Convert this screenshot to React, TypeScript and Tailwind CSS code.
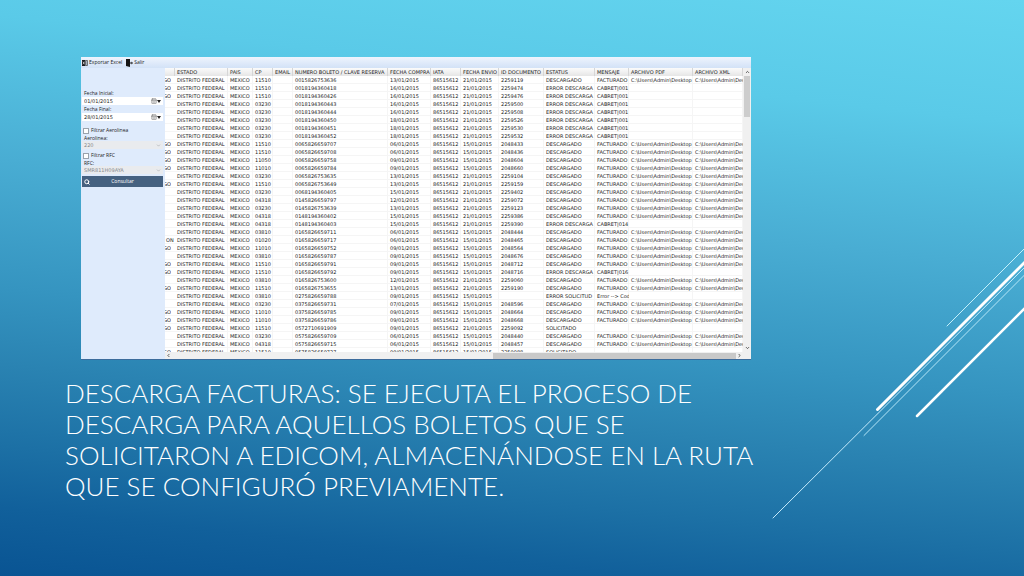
import { CalendarDays, ChevronDown, ChevronLeft, ChevronRight, ChevronUp, Search } from "lucide-react";

type Row = [string, string, string, string, string, string, string, string, string];

const ROUTE = "C:\\Users\\Admin\\Desktop";

// city, postal code, ticket, purchase date, IATA, sent date, document, status, message
const rows: Row[] = [
  ["GO", "11510", "0015826753636", "13/01/2015", "86515612", "21/01/2015", "2259119", "DESCARGADO", "FACTURADO"],
  ["GO", "11510", "0018194360418", "16/01/2015", "86515612", "21/01/2015", "2259474", "ERROR DESCARGA", "CABRET|001"],
  ["GO", "11510", "0018194360426", "16/01/2015", "86515612", "21/01/2015", "2259476", "ERROR DESCARGA", "CABRET|001"],
  ["", "03230", "0018194360443", "16/01/2015", "86515612", "21/01/2015", "2259500", "ERROR DESCARGA", "CABRET|001"],
  ["", "03230", "0018194360444", "16/01/2015", "86515612", "21/01/2015", "2259508", "ERROR DESCARGA", "CABRET|001"],
  ["", "03230", "0018194360450", "18/01/2015", "86515612", "21/01/2015", "2259526", "ERROR DESCARGA", "CABRET|001"],
  ["", "03230", "0018194360451", "18/01/2015", "86515612", "21/01/2015", "2259530", "ERROR DESCARGA", "CABRET|001"],
  ["", "03230", "0018194360452", "18/01/2015", "86515612", "21/01/2015", "2259532", "ERROR DESCARGA", "CABRET|001"],
  ["GO", "11510", "0065826659707", "06/01/2015", "86515612", "15/01/2015", "2048433", "DESCARGADO", "FACTURADO"],
  ["GO", "11510", "0065826659708", "06/01/2015", "86515612", "15/01/2015", "2048436", "DESCARGADO", "FACTURADO"],
  ["GO", "11050", "0065826659758", "09/01/2015", "86515612", "15/01/2015", "2048604", "DESCARGADO", "FACTURADO"],
  ["GO", "11010", "0065826659784", "09/01/2015", "86515612", "15/01/2015", "2048660", "DESCARGADO", "FACTURADO"],
  ["", "03230", "0065826753635", "13/01/2015", "86515612", "21/01/2015", "2259104", "DESCARGADO", "FACTURADO"],
  ["GO", "11510", "0065826753649", "13/01/2015", "86515612", "21/01/2015", "2259159", "DESCARGADO", "FACTURADO"],
  ["", "03230", "0068194360405", "15/01/2015", "86515612", "21/01/2015", "2259402", "DESCARGADO", "FACTURADO"],
  ["", "04318", "0145826659797", "12/01/2015", "86515612", "21/01/2015", "2259072", "DESCARGADO", "FACTURADO"],
  ["", "03230", "0145826753639", "13/01/2015", "86515612", "21/01/2015", "2259123", "DESCARGADO", "FACTURADO"],
  ["", "04318", "0148194360402", "15/01/2015", "86515612", "21/01/2015", "2259386", "DESCARGADO", "FACTURADO"],
  ["", "04318", "0148194360403", "15/01/2015", "86515612", "21/01/2015", "2259390", "ERROR DESCARGA", "CABRET|014"],
  ["", "03810", "0165826659711", "06/01/2015", "86515612", "15/01/2015", "2048444", "DESCARGADO", "FACTURADO"],
  ["ON", "01020", "0165826659717", "06/01/2015", "86515612", "15/01/2015", "2048465", "DESCARGADO", "FACTURADO"],
  ["GO", "11010", "0165826659752", "09/01/2015", "86515612", "15/01/2015", "2048564", "DESCARGADO", "FACTURADO"],
  ["", "03810", "0165826659787", "09/01/2015", "86515612", "15/01/2015", "2048676", "DESCARGADO", "FACTURADO"],
  ["GO", "11510", "0165826659791", "09/01/2015", "86515612", "15/01/2015", "2048712", "DESCARGADO", "FACTURADO"],
  ["GO", "11510", "0165826659792", "09/01/2015", "86515612", "15/01/2015", "2048716", "ERROR DESCARGA", "CABRET|016"],
  ["", "03810", "0165826753600", "12/01/2015", "86515612", "21/01/2015", "2259060", "DESCARGADO", "FACTURADO"],
  ["GO", "11510", "0165826753655", "13/01/2015", "86515612", "21/01/2015", "2259190", "DESCARGADO", "FACTURADO"],
  ["", "03810", "0275826659788", "09/01/2015", "86515612", "15/01/2015", "", "ERROR SOLICITUD", "Error --> Cod"],
  ["", "03230", "0375826659731", "07/01/2015", "86515612", "15/01/2015", "2048596", "DESCARGADO", "FACTURADO"],
  ["GO", "11010", "0375826659785", "09/01/2015", "86515612", "15/01/2015", "2048664", "DESCARGADO", "FACTURADO"],
  ["GO", "11010", "0375826659786", "09/01/2015", "86515612", "15/01/2015", "2048668", "DESCARGADO", "FACTURADO"],
  ["GO", "11510", "0572710691909", "09/01/2015", "86515612", "21/01/2015", "2259092", "SOLICITADO", ""],
  ["", "03230", "0575826659709", "06/01/2015", "86515612", "15/01/2015", "2048440", "DESCARGADO", "FACTURADO"],
  ["", "04318", "0575826659715", "06/01/2015", "86515612", "15/01/2015", "2048457", "DESCARGADO", "FACTURADO"],
  ["GO", "11510", "0575826659727", "09/01/2015", "86515612", "15/01/2015", "2259088", "SOLICITADO", ""],
];

const headers = [
  "", "ESTADO", "PAIS", "CP", "EMAIL", "NUMERO BOLETO / CLAVE RESERVA", "FECHA COMPRA", "IATA",
  "FECHA ENVIO", "ID DOCUMENTO", "ESTATUS", "MENSAJE", "ARCHIVO PDF", "ARCHIVO XML",
];

function DateField({ id, label, value }: { id: string; label: string; value: string }) {
  return (
    <div className="flex flex-col">
      <label htmlFor={id} className="pl-0.5 leading-[7px]">{label}</label>
      <div className="flex h-2 items-center bg-white pr-0.5">
        <input id={id} defaultValue={value} className="h-2 min-w-0 flex-1 bg-transparent pl-0.5 font-['DejaVu_Sans',sans-serif] leading-[8px] outline-none" />
        <button type="button" aria-label={label} className="flex items-center text-[#666]">
          <CalendarDays className="size-[6px]" />
          <svg viewBox="0 0 4 3" className="h-[3px] w-[4px]"><path d="M0 0h4L2 3z" fill="#222" /></svg>
        </button>
      </div>
    </div>
  );
}

function FilterField({ id, check, label, value }: { id: string; check: string; label: string; value: string }) {
  return (
    <div className="flex flex-col">
      <label className="flex h-2 items-center gap-0.5 pl-px">
        <input type="checkbox" className="size-[6px] appearance-none border border-[#9aa2ac] bg-white" />
        {check}
      </label>
      <label htmlFor={id} className="pl-0.5 leading-[6px]">{label}</label>
      <div className="flex h-2 items-center bg-[#e9ebee] pr-0.5 text-[#85888d]">
        <select id={id} disabled className="h-2 min-w-0 flex-1 appearance-none bg-transparent pl-0.5 font-['DejaVu_Sans',sans-serif] leading-[8px] opacity-100">
          <option>{value}</option>
        </select>
        <ChevronDown className="size-[5px]" />
      </div>
    </div>
  );
}

function InvoiceTable() {
  return (
    <table className="w-full table-fixed border-collapse text-left font-['DejaVu_Sans',sans-serif] text-[5px] leading-[8px] text-[#1c1c1c]">
      <colgroup>
        <col className="w-[10px]" />
        <col className="w-[53px]" />
        <col className="w-[25px]" />
        <col className="w-[20px]" />
        <col className="w-[20px]" />
        <col className="w-[95px]" />
        <col className="w-[43px]" />
        <col className="w-[30px]" />
        <col className="w-[38px]" />
        <col className="w-[45px]" />
        <col className="w-[51px]" />
        <col className="w-[34px]" />
        <col className="w-[64px]" />
        <col />
      </colgroup>
      <thead>
        <tr className="bg-linear-to-b from-[#fbfbfb] to-[#e6e6e6]">
          {headers.map((h, i) => (
            <th key={i} className="h-2 overflow-hidden p-0 pl-0.5 font-normal whitespace-nowrap shadow-[inset_-1px_0_0_#d6d6d6]">{h}</th>
          ))}
        </tr>
      </thead>
      <tbody>
        {rows.map(([city, cp, ticket, bought, iata, sent, doc, status, message]) => {
          const path = message === "FACTURADO" ? ROUTE : "";
          const cells = ["DISTRITO FEDERAL", "MEXICO", cp, "", ticket, bought, iata, sent, doc, status, message, path, path];
          return (
            <tr key={ticket} className="shadow-[inset_0_-1px_0_#f5f5f5]">
              <td className="h-2 p-0">
                <span className={city === "ON" ? "block pl-px" : "flex w-[6px] justify-end overflow-hidden"}>{city}</span>
              </td>
              {cells.map((c, i) => (
                <td key={i} className="h-2 overflow-hidden p-0 pl-0.5 whitespace-nowrap shadow-[inset_-1px_0_0_#f5f5f5]">{c}</td>
              ))}
            </tr>
          );
        })}
      </tbody>
    </table>
  );
}

export default function App() {
  return (
    <main className="relative min-h-screen overflow-hidden bg-[linear-gradient(186deg,#64d5ef_0%,#5acae8_18%,#49add3_39%,#3594c0_58%,#2a83b2_69%,#1c70a5_81%,#11609b_90%,#095493_100%)] pt-[57px] pb-8">
      <svg className="absolute top-[240px] right-0 h-[290px] w-[264px]" viewBox="0 0 264 290" fill="none" stroke="#fff" strokeLinecap="round" aria-hidden="true">
        <path d="M187 86 266 7" stroke="#c5f0fb" />
        <path d="M117.500 169.500 266 21" strokeWidth="3" />
        <path d="M13 278 266 26" stroke="#c5eafb" />
        <path d="M104 195.500 266 33.500" stroke="#b5e6f8" />
        <path d="M157 176 266 67" strokeWidth="2.500" />
      </svg>

      <section className="relative ml-[81px] flex w-[670px] max-w-full flex-col border-b border-[#3c6c9c] bg-[#dfebfc] font-['Open_Sans',sans-serif] text-[5px] text-[#222]">
        <header className="flex h-[11px] items-center gap-1 bg-linear-to-b from-[#eef4fd] to-[#d3e2f7] pl-px">
          <button type="button" className="flex items-center gap-px">
            <svg viewBox="0 0 6 6" className="size-[6px]"><path d="M0 0h3.500v6H0z" fill="#1d1d1f" /><path d="M4 .5h1.500v5H4z" fill="none" stroke="#444" strokeWidth=".7" /><path d="M.9 1.700l1.600 2.600M2.500 1.700.9 4.300" stroke="#fff" strokeWidth=".6" /></svg>
            Exportar Excel
          </button>
          <button type="button" className="flex items-center gap-px">
            <svg viewBox="0 0 7 8" className="h-2 w-[7px]"><path d="M0 0h4v8L0 7z" fill="#151515" /><path d="M4 4l1.500-1.500v1H7v1H5.500v1z" fill="#222" /></svg>
            Salir
          </button>
        </header>
        <div className="flex h-[291px]">
          <aside className="flex w-[84px] shrink-0 flex-col gap-px pt-[22px] pr-[2px] pl-px">
            <DateField id="inicial" label="Fecha Inicial:" value="01/01/2015" />
            <DateField id="final" label="Fecha Final:" value="28/01/2015" />
            <div className="mt-[5px] flex flex-col gap-[3px] pb-px">
              <FilterField id="aerolinea" check="Filtrar Aerolinea" label="Aerolinea:" value="220" />
              <FilterField id="rfc" check="Filtrar RFC" label="RFC:" value="SMR811H09AYA" />
            </div>
            <button type="button" className="flex h-[11px] items-center bg-[#456180] px-0.5 text-white">
              <Search className="size-[6px]" strokeWidth={4} />
              <span className="flex-1 pr-1.5">Consultar</span>
            </button>
          </aside>
          <div className="flex min-w-0 flex-1 flex-col bg-white">
            <div className="flex min-h-0 flex-1">
              <div className="min-w-0 flex-1 overflow-hidden"><InvoiceTable /></div>
              <div className="flex w-2 flex-col items-center justify-between bg-[#f0f0f0] text-[#444]">
                <div className="flex w-full flex-col items-center">
                  <ChevronUp className="h-2 w-[5px]" strokeWidth={4} />
                  <div className="h-[41px] w-[6px] bg-[#cdcdcd]" />
                </div>
                <ChevronDown className="h-2 w-[5px]" strokeWidth={4} />
              </div>
            </div>
            <div className="flex h-[7px] items-center bg-[#f0f0f0] pr-2 text-[#444]">
              <ChevronLeft className="w-[7px]" strokeWidth={4} size={5} />
              <div className="flex h-full flex-1 items-center justify-end"><div className="h-[6px] w-[43%] bg-[#c9c9c9]" /></div>
              <ChevronRight className="w-[7px]" strokeWidth={4} size={5} />
            </div>
          </div>
        </div>
      </section>

      <h1 className="relative mt-[18px] ml-[65px] max-w-[720px] font-['Lato',sans-serif] text-[26px] leading-[31px] font-light text-white uppercase">
        Descarga Facturas: se ejecuta el proceso de<br />descarga para aquellos boletos que se<br />solicitaron a EDICOM, almacenándose en la ruta<br />que se configuró previamente.
      </h1>
    </main>
  );
}
